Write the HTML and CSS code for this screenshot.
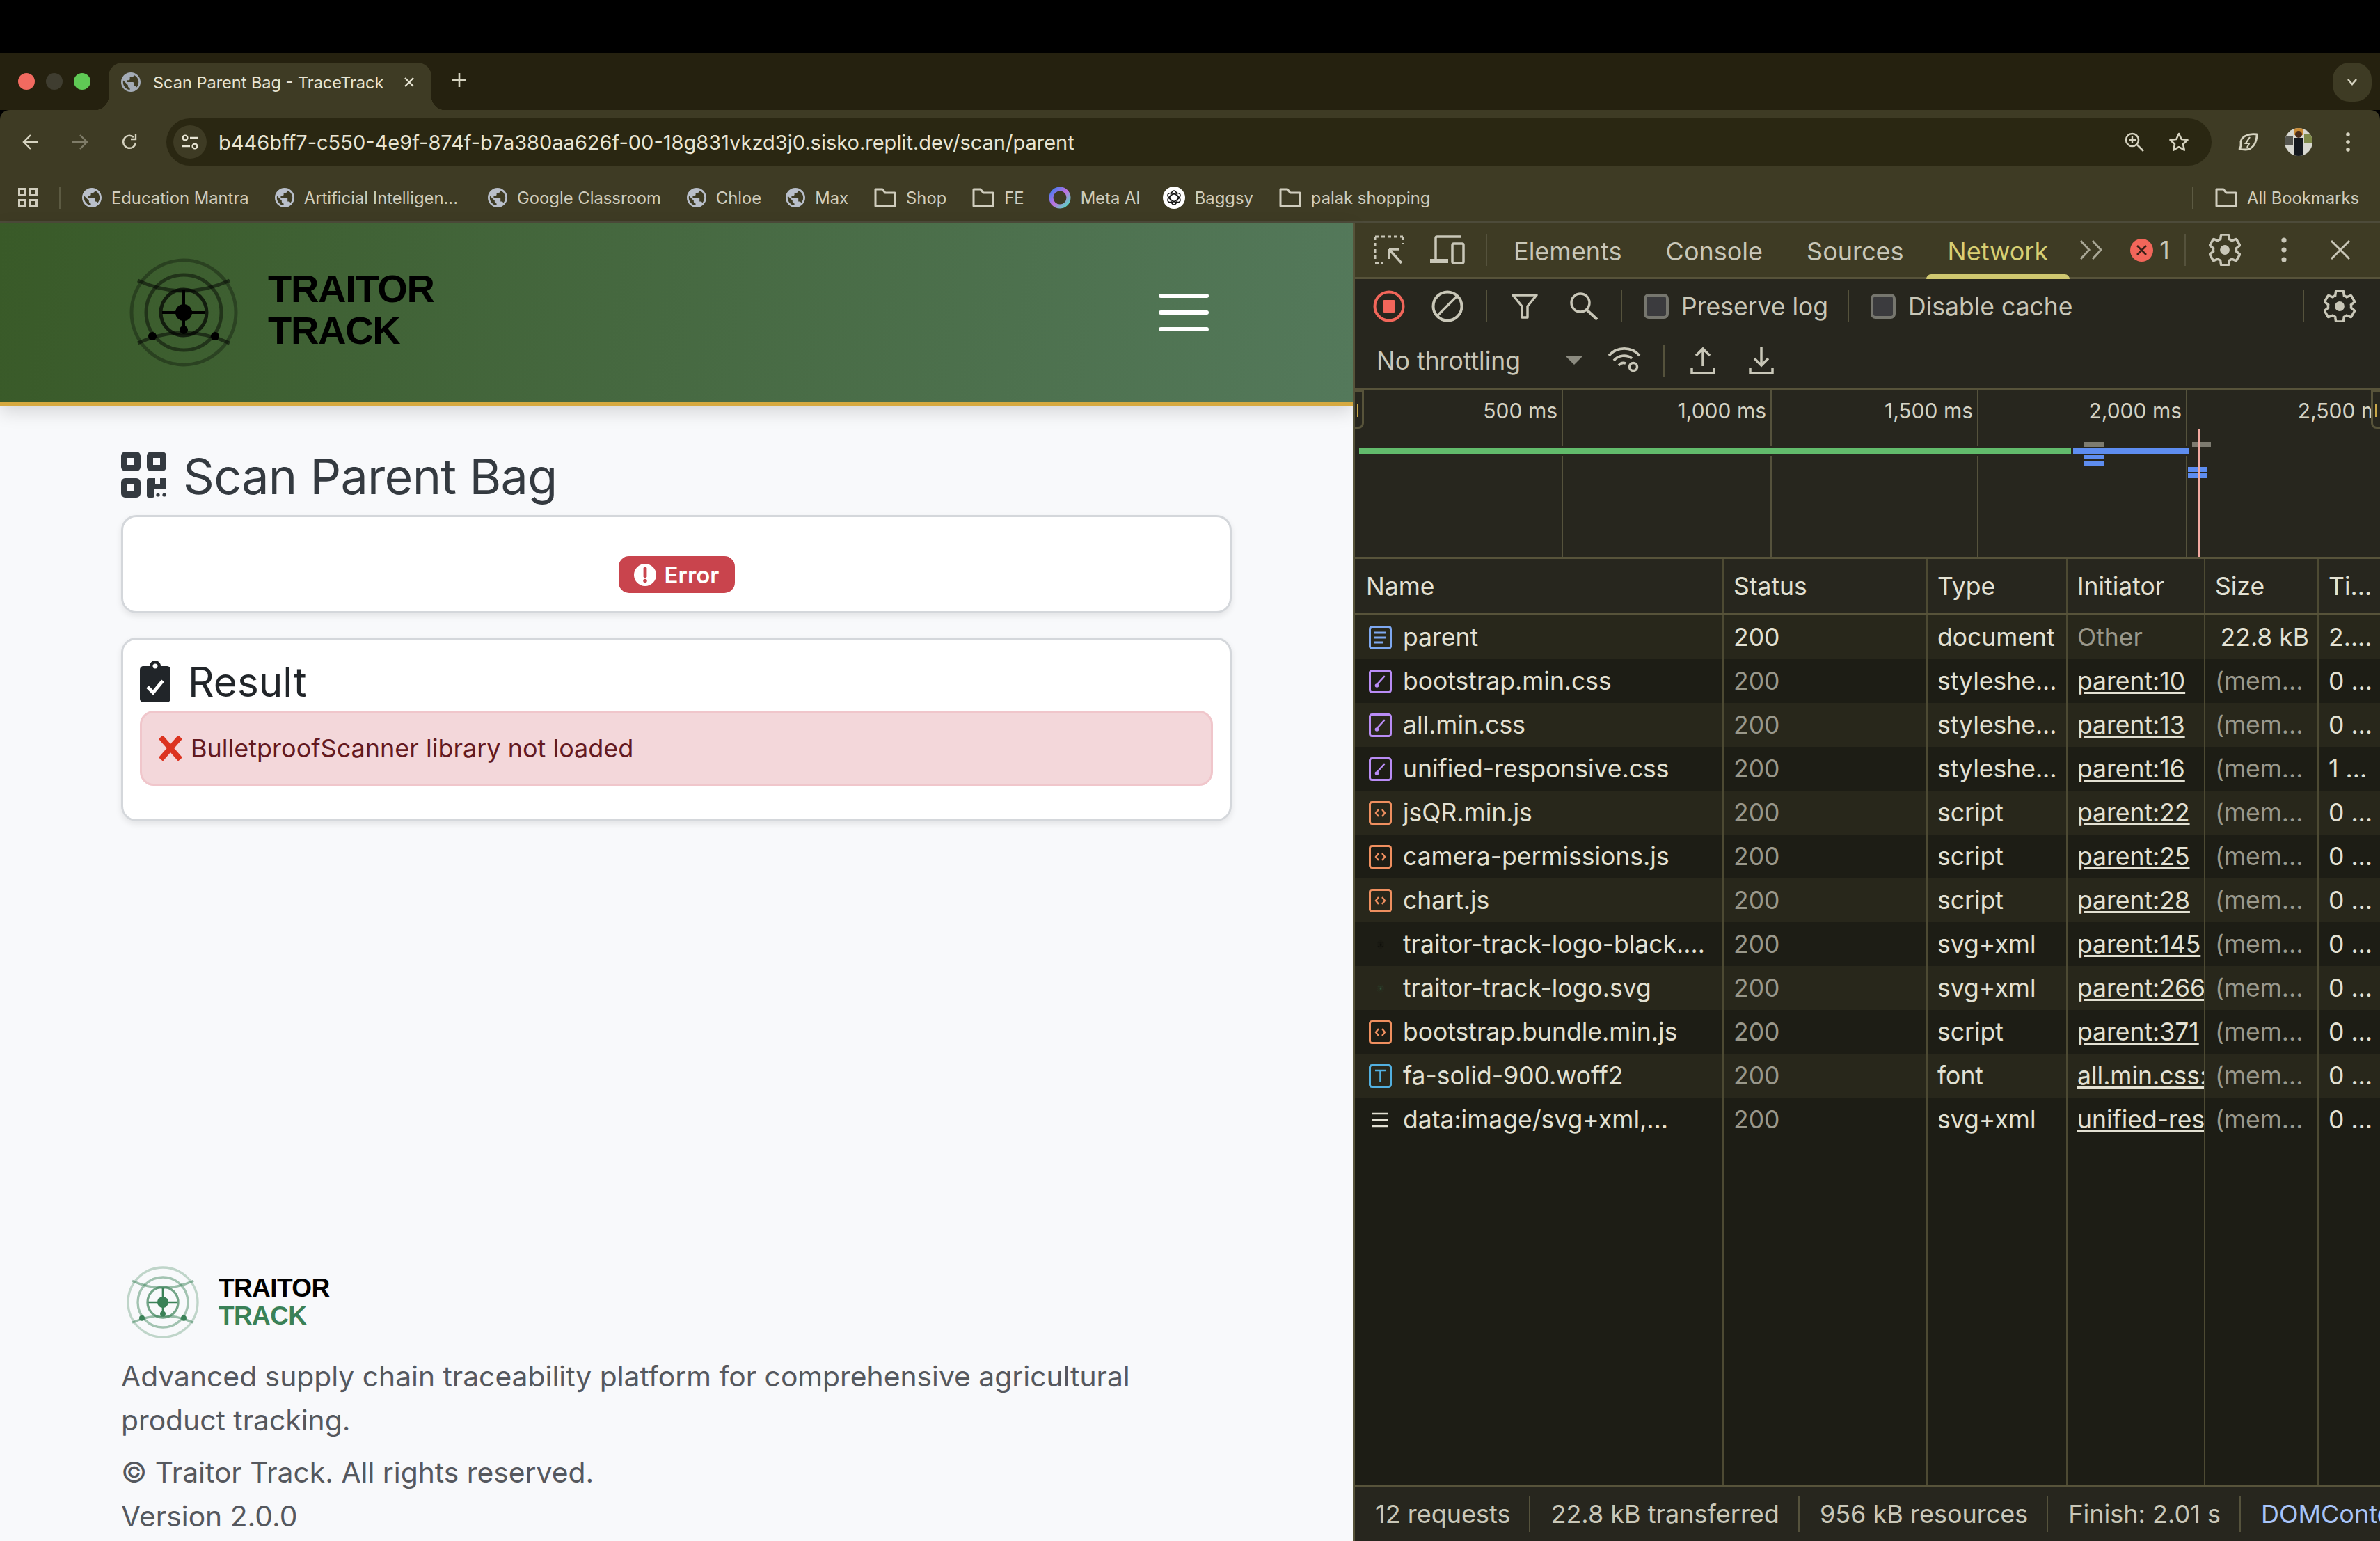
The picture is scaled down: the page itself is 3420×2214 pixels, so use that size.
FILE: index.html
```html
<!DOCTYPE html>
<html lang="en">
<head>
  <meta charset="UTF-8">
  <title>Scan Parent Bag - TraceTrack</title>
  <link rel="stylesheet" href="styles.css">
</head>
<body>
  <svg class="sprites" width="0" height="0">
    <symbol id="globe" viewBox="2 2 20 20"><path fill="currentColor" d="M12 2C6.48 2 2 6.48 2 12s4.48 10 10 10 10-4.48 10-10S17.52 2 12 2zm-1 17.93c-3.95-.49-7-3.85-7-7.93 0-.62.08-1.21.21-1.79L9 15v1c0 1.1.9 2 2 2v1.93zm6.9-2.54c-.26-.81-1-1.39-1.9-1.39h-1v-3c0-.55-.45-1-1-1H8v-2h2c.55 0 1-.45 1-1V7h2c1.1 0 2-.9 2-2v-.41c2.93 1.19 5 4.06 5 7.41 0 2.08-.8 3.97-2.1 5.39z"/></symbol>
    <symbol id="folder" viewBox="0 0 32 28"><path fill="none" stroke="currentColor" stroke-width="3" stroke-linejoin="round" d="M2 2h10l4 5h14v19H2z"/></symbol>
    <symbol id="gear" viewBox="2 2 20 20"><path fill="none" stroke="currentColor" stroke-width="1.5" d="M19.14 12.94c.04-.3.06-.61.06-.94 0-.32-.02-.64-.07-.94l2.03-1.58c.18-.14.23-.41.12-.61l-1.92-3.32c-.12-.22-.37-.29-.59-.22l-2.39.96c-.5-.38-1.03-.7-1.62-.94l-.36-2.54c-.04-.24-.24-.41-.48-.41h-3.84c-.24 0-.43.17-.47.41l-.36 2.54c-.59.24-1.13.57-1.62.94l-2.39-.96c-.22-.08-.47 0-.59.22L2.74 8.87c-.12.21-.08.47.12.61l2.03 1.58c-.05.3-.09.63-.09.94s.02.64.07.94l-2.03 1.58c-.18.14-.23.41-.12.61l1.92 3.32c.12.22.37.29.59.22l2.39-.96c.5.38 1.03.7 1.62.94l.36 2.54c.05.24.24.41.48.41h3.84c.24 0 .44-.17.47-.41l.36-2.54c.59-.24 1.13-.56 1.62-.94l2.39.96c.22.08.47 0 .59-.22l1.92-3.32c.12-.22.07-.47-.12-.61l-2.01-1.58z"/><circle cx="12" cy="12" r="3" fill="currentColor"/></symbol>
    <symbol id="logo" viewBox="0 0 156 156">
      <g fill="none" stroke="currentColor">
        <circle cx="78" cy="78" r="75" stroke-width="5" opacity=".3"/>
        <circle cx="78" cy="78" r="54" stroke-width="5" opacity=".45"/>
        <circle cx="78" cy="78" r="33" stroke-width="5" opacity=".7"/>
        <path d="M12 32Q78 62 144 32" stroke-width="5" opacity=".5"/>
        <path d="M12 122Q78 92 144 122" stroke-width="5" opacity=".5"/>
        <path d="M47 78H109M78 46V102" stroke-width="4"/>
      </g>
      <g fill="currentColor">
        <circle cx="78" cy="78" r="12"/>
        <circle cx="78" cy="103" r="6"/>
        <circle cx="33" cy="112" r="6"/>
        <circle cx="123" cy="112" r="6"/>
      </g>
    </symbol>
    <symbol id="doc-css" viewBox="0 0 33 34"><rect x="1.5" y="1.5" width="30" height="31" rx="3" fill="none" stroke="currentColor" stroke-width="3"/><path d="M22 10L13 20" stroke="currentColor" stroke-width="2.6" stroke-linecap="round"/><circle cx="11.5" cy="23" r="2.8" fill="currentColor"/></symbol>
    <symbol id="doc-js" viewBox="0 0 33 34"><rect x="1.5" y="1.5" width="30" height="31" rx="3" fill="none" stroke="currentColor" stroke-width="3"/><path d="M14 12l-4 5 4 5M19 12l4 5-4 5" fill="none" stroke="currentColor" stroke-width="2.4"/></symbol>
  </svg>

  <div class="mac-top"></div>

  <div class="tabstrip">
    <div class="lights">
      <span class="light red"></span>
      <span class="light grey"></span>
      <span class="light green"></span>
    </div>
    <div class="tab">
      <svg class="tab-fav"><use href="#globe"/></svg>
      <span class="tab-title">Scan Parent Bag - TraceTrack</span>
      <svg class="tab-x" viewBox="0 0 16 16"><path d="M2 2l12 12M14 2L2 14" stroke="currentColor" stroke-width="2.4"/></svg>
    </div>
    <svg class="tab-new" viewBox="0 0 20 20"><path d="M10 0v20M0 10h20" stroke="currentColor" stroke-width="2.6"/></svg>
    <div class="tab-list"><svg viewBox="0 0 16 10"><path d="M2 1l6 7 6-7" fill="none" stroke="currentColor" stroke-width="2.6"/></svg></div>
  </div>

  <div class="toolbar">
    <svg class="tb-icon" viewBox="0 0 24 24"><path d="M23 12H3M12 2L2 12l10 10" fill="none" stroke="currentColor" stroke-width="2.4"/></svg>
    <svg class="tb-icon fwd" viewBox="0 0 24 24"><path d="M1 12h20M12 2l10 10-10 10" fill="none" stroke="currentColor" stroke-width="2.4"/></svg>
    <svg class="tb-icon reload" viewBox="0 0 24 24"><path d="M21 13a9 9 0 1 1-3-8M21 1v7h-7" fill="none" stroke="currentColor" stroke-width="2.4"/></svg>
    <div class="omnibox">
      <span class="tune"><svg viewBox="0 0 26 26"><g fill="none" stroke="currentColor" stroke-width="2.4"><circle cx="6" cy="7" r="3.4"/><path d="M13 7h11M2 19h11"/><circle cx="20" cy="19" r="3.4"/></g></svg></span>
      <span class="url">b446bff7-c550-4e9f-874f-b7a380aa626f-00-18g831vkzd3j0.sisko.replit.dev/scan/parent</span>
      <svg class="omni-zoom" viewBox="0 0 28 28"><g fill="none" stroke="currentColor" stroke-width="2.6"><circle cx="11" cy="11" r="9"/><path d="M18 18l9 9"/></g><path d="M11 6v10M6 11h10" stroke="currentColor" stroke-width="2.4"/></svg>
      <svg class="omni-star" viewBox="0 0 30 30"><path d="M15 3l3.7 8 8.8 1-6.5 6 1.8 8.7L15 22.2 7.2 26.7 9 18l-6.5-6 8.800-1z" fill="none" stroke="currentColor" stroke-width="2.6" stroke-linejoin="round"/></svg>
    </div>
    <svg class="tb-leaf" viewBox="0 0 30 30"><path d="M27 4C14 2 3 8 4 17c.5 3-.5 6-2 8 3 1 6 1 9 1 10 0 16-10 16-22z" fill="none" stroke="currentColor" stroke-width="2.8" stroke-linejoin="round"/><path d="M17 8l-6 9h5l-3 6" fill="none" stroke="currentColor" stroke-width="2.2"/></svg>
    <svg class="avatar" viewBox="0 0 40 40"><defs><clipPath id="avatar-clip"><circle cx="20" cy="20" r="20"/></clipPath></defs><g clip-path="url(#avatar-clip)"><rect width="40" height="40" fill="#d8d8d0"/><rect x="28" y="8" width="12" height="14" fill="#7f8a4a"/><rect width="12" height="12" y="12" fill="#55554f"/><rect x="13" y="0" width="14" height="10" fill="#c98a34"/><circle cx="20" cy="9" r="5" fill="#4a2c1a"/><path d="M14 40V14h12v26z" fill="#14181e"/></g></svg>
    <svg class="tb-dots" viewBox="0 0 6 28"><circle cx="3" cy="3" r="2.8" fill="currentColor"/><circle cx="3" cy="14" r="2.8" fill="currentColor"/><circle cx="3" cy="25" r="2.8" fill="currentColor"/></svg>
  </div>

  <div class="bookmarks">
    <svg class="bm-apps" viewBox="0 0 28 28"><g fill="none" stroke="currentColor" stroke-width="3"><rect x="1.5" y="1.5" width="9" height="9"/><rect x="17.5" y="1.5" width="9" height="9"/><rect x="1.5" y="17.5" width="9" height="9"/><rect x="17.5" y="17.5" width="9" height="9"/></g></svg>
    <span class="bm-sep"></span>
    <a class="bm"><svg class="bm-globe"><use href="#globe"/></svg>Education Mantra</a>
    <a class="bm bm-long"><svg class="bm-globe"><use href="#globe"/></svg>Artificial Intelligen...</a>
    <a class="bm"><svg class="bm-globe"><use href="#globe"/></svg>Google Classroom</a>
    <a class="bm"><svg class="bm-globe"><use href="#globe"/></svg>Chloe</a>
    <a class="bm bm-max"><svg class="bm-globe"><use href="#globe"/></svg>Max</a>
    <a class="bm"><svg class="bm-folder"><use href="#folder"/></svg>Shop</a>
    <a class="bm"><svg class="bm-folder"><use href="#folder"/></svg>FE</a>
    <a class="bm bm-meta"><svg class="bm-ring" viewBox="0 0 32 32"><defs><linearGradient id="meta-grad" x1="0" y1="0" x2="1" y2="1"><stop offset="0" stop-color="#3f7cf0"/><stop offset=".5" stop-color="#c06fe0"/><stop offset="1" stop-color="#4de0c0"/></linearGradient></defs><circle cx="16" cy="16" r="12.5" fill="none" stroke="url(#meta-grad)" stroke-width="6"/></svg>Meta AI</a>
    <a class="bm"><svg class="bm-ring" viewBox="0 0 32 32"><circle cx="16" cy="16" r="16" fill="#fff"/><g fill="none" stroke="#111" stroke-width="1.5"><ellipse cx="16" cy="16" rx="10" ry="5" transform="rotate(30 16 16)"/><ellipse cx="16" cy="16" rx="10" ry="5" transform="rotate(90 16 16)"/><ellipse cx="16" cy="16" rx="10" ry="5" transform="rotate(150 16 16)"/></g></svg>Baggsy</a>
    <a class="bm"><svg class="bm-folder"><use href="#folder"/></svg>palak shopping</a>
    <span class="bm-sep bm-sep-end"></span>
    <a class="bm"><svg class="bm-folder"><use href="#folder"/></svg>All Bookmarks</a>
  </div>

  <div class="split">
    <div class="page">
      <header class="site-head">
        <svg class="head-logo"><use href="#logo"/></svg>
        <div class="head-brand">TRAITOR<br>TRACK</div>
        <button class="burger"><span></span><span></span><span></span></button>
      </header>

      <main class="content">
        <h1 class="page-title">
          <svg class="qr-icon" viewBox="0 0 65 66">
            <path fill-rule="evenodd" fill="#343a40" d="M6 0h16a6 6 0 0 1 6 6v16a6 6 0 0 1-6 6H6a6 6 0 0 1-6-6V6a6 6 0 0 1 6-6zm3 9v10h10V9zM43 0h16a6 6 0 0 1 6 6v16a6 6 0 0 1-6 6H43a6 6 0 0 1-6-6V6a6 6 0 0 1 6-6zm3 9v10h10V9zM6 38h16a6 6 0 0 1 6 6v16a6 6 0 0 1-6 6H6a6 6 0 0 1-6-6V44a6 6 0 0 1 6-6zm3 9v10h10V47zM40 38h9v8h7v-8h9v16H48v9a3 3 0 0 1-3 3h-5a3 3 0 0 1-3-3V41a3 3 0 0 1 3-3z"/>
            <circle cx="53" cy="62" r="2.6" fill="#343a40"/><circle cx="62" cy="62" r="2.6" fill="#343a40"/>
          </svg>
          Scan Parent Bag
        </h1>

        <section class="card status-card">
          <span class="badge">
            <svg viewBox="0 0 30 30"><circle cx="15" cy="15" r="15" fill="#fff"/><path d="M15 6v11" stroke="#c9444d" stroke-width="4.5" stroke-linecap="round"/><circle cx="15" cy="23" r="2.6" fill="#c9444d"/></svg>
            Error
          </span>
        </section>

        <section class="card result-card">
          <h2 class="result-title">
            <svg viewBox="0 0 44 60"><path fill="#212529" fill-rule="evenodd" d="M5 8h9a8 8 0 0 1 16 0h9a5 5 0 0 1 5 5v42a5 5 0 0 1-5 5H5a5 5 0 0 1-5-5V13a5 5 0 0 1 5-5zm17-3.500a3.500 3.500 0 1 0 0 7 3.500 3.500 0 0 0 0-7z"/><path d="M11 38l8 8 14-17" fill="none" stroke="#fff" stroke-width="5"/></svg>
            Result
          </h2>
          <div class="alert">
            <svg viewBox="0 0 36 36"><path d="M4 2l28 32M32 2L4 34" stroke="#dc3320" stroke-width="8"/></svg>
            BulletproofScanner library not loaded
          </div>
        </section>
      </main>

      <footer class="site-foot">
        <div class="foot-brand">
          <svg class="foot-logo"><use href="#logo"/></svg>
          <div class="foot-name">TRAITOR<br><span>TRACK</span></div>
        </div>
        <p>Advanced supply chain traceability platform for comprehensive agricultural product tracking.</p>
        <p>© Traitor Track. All rights reserved.<br>Version 2.0.0</p>
      </footer>
    </div>

    <div class="devtools">
      <div class="dt-tabs">
        <svg class="dt-inspect" viewBox="0 0 44 42"><path d="M2 2h40M2 2v36M2 40h12M42 2v10" fill="none" stroke="currentColor" stroke-width="3" stroke-dasharray="5 4"/><path d="M22 20h14M22 20v14M22 20l18 20" fill="none" stroke="currentColor" stroke-width="3.5"/></svg>
        <svg class="dt-device" viewBox="0 0 50 42"><path d="M8 36V4a2 2 0 0 1 2-2h34" fill="none" stroke="currentColor" stroke-width="3.5"/><path d="M0 34h26v6H0z" fill="currentColor"/><rect x="32" y="12" width="16" height="28" rx="2" fill="none" stroke="currentColor" stroke-width="3.5"/></svg>
        <span class="dt-sep"></span>
        <span class="dt-tab">Elements</span>
        <span class="dt-tab">Console</span>
        <span class="dt-tab">Sources</span>
        <span class="dt-tab active">Network</span>
        <svg class="dt-more" viewBox="0 0 36 30"><path d="M3 2l12 13L3 28M20 2l12 13-12 13" fill="none" stroke="currentColor" stroke-width="3"/></svg>
        <svg class="dt-err" viewBox="0 0 33 33"><circle cx="16.5" cy="16.5" r="16.5" fill="#f2665a"/><path d="M10 10l13 13M23 10L10 23" stroke="#3a2018" stroke-width="2.6"/></svg>
        <span class="dt-errcount">1</span>
        <span class="dt-sep dt-sep-err"></span>
        <svg class="dt-gear"><use href="#gear"/></svg>
        <svg class="dt-dots" viewBox="0 0 8 36"><circle cx="4" cy="4" r="3.6" fill="currentColor"/><circle cx="4" cy="18" r="3.6" fill="currentColor"/><circle cx="4" cy="32" r="3.6" fill="currentColor"/></svg>
        <svg class="dt-close" viewBox="0 0 30 30"><path d="M2 2l26 26M28 2L2 28" stroke="currentColor" stroke-width="3"/></svg>
      </div>

      <div class="dt-row1">
        <svg class="rec" viewBox="0 0 46 46"><circle cx="23" cy="23" r="20.5" fill="none" stroke="#f2665a" stroke-width="4"/><rect x="14" y="14" width="18" height="18" rx="2" fill="#f2665a"/></svg>
        <svg class="clear" viewBox="0 0 46 46"><circle cx="23" cy="23" r="20.5" fill="none" stroke="currentColor" stroke-width="4"/><path d="M36 9L9 36" stroke="currentColor" stroke-width="3.5"/></svg>
        <span class="dt-sep"></span>
        <svg class="filter" viewBox="0 0 38 36"><path d="M2 2h34L23 18v16h-8V18z" fill="none" stroke="currentColor" stroke-width="3.5" stroke-linejoin="round"/></svg>
        <svg class="search" viewBox="0 0 42 40"><circle cx="16" cy="15" r="13" fill="none" stroke="currentColor" stroke-width="3.5"/><path d="M25 25l15 14" stroke="currentColor" stroke-width="4"/></svg>
        <span class="dt-sep"></span>
        <span class="check"></span><span class="chk-label">Preserve log</span>
        <span class="dt-sep"></span>
        <span class="check"></span><span class="chk-label">Disable cache</span>
        <span class="dt-sep dt-sep-gear"></span>
        <svg class="dt-gear"><use href="#gear"/></svg>
      </div>

      <div class="dt-row2">
        <span class="throttle">No throttling</span>
        <span class="caret"></span>
        <svg class="wifi" viewBox="0 0 50 40"><g fill="none" stroke="currentColor" stroke-width="3.6"><path d="M2 13a29 29 0 0 1 44 0"/><path d="M9 20a19 19 0 0 1 26-3"/><path d="M16 27a9 9 0 0 1 10-3"/></g><circle cx="37" cy="29" r="5.5" fill="none" stroke="currentColor" stroke-width="3.5"/></svg>
        <span class="dt-sep"></span>
        <svg class="updown" viewBox="0 0 36 40"><path d="M18 28V3M8 13L18 3l10 10M2 30v8h32v-8" fill="none" stroke="currentColor" stroke-width="3.5"/></svg>
        <svg class="updown" viewBox="0 0 36 40"><path d="M18 1v26M8 17l10 10 10-10M2 30v8h32v-8" fill="none" stroke="currentColor" stroke-width="3.5"/></svg>
      </div>

      <div class="overview">
        <div class="tick" style="width: 299px">500 ms</div>
        <div class="tick" style="width: 300px">1,000 ms</div>
        <div class="tick" style="width: 297px">1,500 ms</div>
        <div class="tick" style="width: 300px">2,000 ms</div>
        <div class="tick tick-last">2,500 ms</div>
        <span class="handle handle-l"></span>
        <span class="handle handle-r"></span>
        <span class="bar bar-green"></span>
        <span class="bar bar-blue"></span>
        <span class="bar bar-grey grey-a"></span>
        <span class="bar bar-grey grey-b"></span>
        <span class="bar bar-mini mini-a"></span>
        <span class="bar bar-mini mini-b"></span>
        <span class="bar bar-mini mini-c"></span>
        <span class="bar bar-mini mini-d"></span>
        <span class="load-line"></span>
      </div>

      <div class="net-table">
        <div class="net-row net-head">
          <div class="cell name">Name</div><div class="cell">Status</div><div class="cell">Type</div><div class="cell">Initiator</div><div class="cell">Size</div><div class="cell">Ti...</div>
        </div>

        <div class="net-row">
          <div class="cell name"><svg class="file file-doc" viewBox="0 0 33 34"><rect x="1.5" y="1.5" width="30" height="31" rx="3" fill="none" stroke="currentColor" stroke-width="3"/><path d="M8 10h17M8 17h17M8 24h12" stroke="currentColor" stroke-width="3"/></svg>parent</div>
          <div class="cell">200</div><div class="cell">document</div><div class="cell dim">Other</div><div class="cell size">22.8 kB</div><div class="cell">2....</div>
        </div>
        <div class="net-row">
          <div class="cell name"><svg class="file file-css"><use href="#doc-css"/></svg>bootstrap.min.css</div>
          <div class="cell dim">200</div><div class="cell">styleshe...</div><div class="cell"><a>parent:10</a></div><div class="cell dim">(mem...</div><div class="cell">0 ...</div>
        </div>
        <div class="net-row">
          <div class="cell name"><svg class="file file-css"><use href="#doc-css"/></svg>all.min.css</div>
          <div class="cell dim">200</div><div class="cell">styleshe...</div><div class="cell"><a>parent:13</a></div><div class="cell dim">(mem...</div><div class="cell">0 ...</div>
        </div>
        <div class="net-row">
          <div class="cell name"><svg class="file file-css"><use href="#doc-css"/></svg>unified-responsive.css</div>
          <div class="cell dim">200</div><div class="cell">styleshe...</div><div class="cell"><a>parent:16</a></div><div class="cell dim">(mem...</div><div class="cell">1 ...</div>
        </div>
        <div class="net-row">
          <div class="cell name"><svg class="file file-js"><use href="#doc-js"/></svg>jsQR.min.js</div>
          <div class="cell dim">200</div><div class="cell">script</div><div class="cell"><a>parent:22</a></div><div class="cell dim">(mem...</div><div class="cell">0 ...</div>
        </div>
        <div class="net-row">
          <div class="cell name"><svg class="file file-js"><use href="#doc-js"/></svg>camera-permissions.js</div>
          <div class="cell dim">200</div><div class="cell">script</div><div class="cell"><a>parent:25</a></div><div class="cell dim">(mem...</div><div class="cell">0 ...</div>
        </div>
        <div class="net-row">
          <div class="cell name"><svg class="file file-js"><use href="#doc-js"/></svg>chart.js</div>
          <div class="cell dim">200</div><div class="cell">script</div><div class="cell"><a>parent:28</a></div><div class="cell dim">(mem...</div><div class="cell">0 ...</div>
        </div>
        <div class="net-row">
          <div class="cell name"><svg class="file file-thumb"><use href="#logo"/></svg>traitor-track-logo-black....</div>
          <div class="cell dim">200</div><div class="cell">svg+xml</div><div class="cell"><a>parent:145</a></div><div class="cell dim">(mem...</div><div class="cell">0 ...</div>
        </div>
        <div class="net-row">
          <div class="cell name"><svg class="file file-thumb green-thumb"><use href="#logo"/></svg>traitor-track-logo.svg</div>
          <div class="cell dim">200</div><div class="cell">svg+xml</div><div class="cell"><a>parent:266</a></div><div class="cell dim">(mem...</div><div class="cell">0 ...</div>
        </div>
        <div class="net-row">
          <div class="cell name"><svg class="file file-js"><use href="#doc-js"/></svg>bootstrap.bundle.min.js</div>
          <div class="cell dim">200</div><div class="cell">script</div><div class="cell"><a>parent:371</a></div><div class="cell dim">(mem...</div><div class="cell">0 ...</div>
        </div>
        <div class="net-row">
          <div class="cell name"><svg class="file file-font" viewBox="0 0 33 34"><rect x="1.5" y="1.5" width="30" height="31" rx="3" fill="none" stroke="currentColor" stroke-width="3"/><path d="M9 9h15M16.5 9v17" stroke="currentColor" stroke-width="2.6"/></svg>fa-solid-900.woff2</div>
          <div class="cell dim">200</div><div class="cell">font</div><div class="cell"><a>all.min.css:</a></div><div class="cell dim">(mem...</div><div class="cell">0 ...</div>
        </div>
        <div class="net-row">
          <div class="cell name"><svg class="file file-data" viewBox="0 0 33 34"><path d="M5 8h23M5 17h23M5 26h23" stroke="currentColor" stroke-width="2.6"/></svg>data:image/svg+xml,...</div>
          <div class="cell dim">200</div><div class="cell">svg+xml</div><div class="cell"><a>unified-responsive.css</a></div><div class="cell dim">(mem...</div><div class="cell">0 ...</div>
        </div>

        <div class="net-row net-fill">
          <div class="cell name"></div><div class="cell"></div><div class="cell"></div><div class="cell"></div><div class="cell"></div><div class="cell"></div>
        </div>
      </div>

      <div class="dt-status">
        <span>12 requests</span>
        <span>22.8 kB transferred</span>
        <span>956 kB resources</span>
        <span>Finish: 2.01 s</span>
        <span class="dom">DOMContentLoaded: 1.97 s</span>
      </div>
    </div>
  </div>
</body>
</html>
```

FILE: styles.css
```css
* { box-sizing: border-box; }
html, body {
  margin: 0;
  width: 3420px;
  height: 2214px;
  overflow: hidden;
}
body {
  display: flex;
  flex-direction: column;
  background: #000;
  font-family: Inter, "Liberation Sans", sans-serif;
}
svg { display: block; flex: none; }
.sprites { position: absolute; }

/* browser chrome */
.mac-top { height: 76px; background: #000; }
.tabstrip {
  height: 82px;
  background: #25210f;
  display: flex;
  align-items: flex-start;
  position: relative;
  color: #d6d3c0;
}
.lights {
  width: 156px;
  padding: 29px 0 0 26px;
  display: flex;
  gap: 16px;
}
.light { width: 24px; height: 24px; border-radius: 50%; }
.light.red { background: #f16a60; }
.light.grey { background: #3f3d30; }
.light.green { background: #5fc955; }
.tab {
  width: 464px;
  height: 68px;
  margin-top: 14px;
  background: #3e3b24;
  border-radius: 20px 20px 0 0;
  display: flex;
  align-items: center;
  padding: 0 0 12px 18px;
  position: relative;
  color: #e8e5d4;
}
.tab::before, .tab::after {
  content: "";
  position: absolute;
  bottom: 0;
  width: 20px;
  height: 20px;
}
.tab::before { left: -20px; background: radial-gradient(circle at 0 0, transparent 20px, #3e3b24 20.5px); }
.tab::after { right: -20px; background: radial-gradient(circle at 100% 0, transparent 20px, #3e3b24 20.5px); }
.tab-fav { width: 28px; height: 28px; color: #a3abb6; }
.tab-title { font-size: 23.5px; margin-left: 18px; width: 360px; white-space: nowrap; }
.tab-x { width: 16px; height: 16px; }
.tab-new { width: 20px; height: 20px; margin: 29px 0 0 30px; }
.tab-list {
  width: 56px;
  height: 56px;
  border-radius: 24px;
  background: #3e3b24;
  margin: 14px 12px 0 auto;
  display: flex;
  align-items: center;
  justify-content: center;
}
.tab-list svg { width: 16px; height: 10px; }

.toolbar {
  height: 80px;
  background: #3e3b24;
  border-radius: 14px 14px 0 0;
  display: flex;
  align-items: flex-start;
  padding: 12px 0 0 32px;
  color: #d6d3c0;
  position: relative;
}
.tb-icon { width: 24px; height: 24px; margin-top: 22px; margin-right: 47px; }
.tb-icon.fwd { color: #7f7c68; }
.tb-icon.reload { margin-right: 41px; }
.omnibox {
  width: 2939px;
  height: 68px;
  border-radius: 34px;
  background: #2a2712;
  display: flex;
  align-items: center;
  padding: 0 32px 0 10px;
  color: #e8e5d4;
}
.tune {
  width: 48px;
  height: 48px;
  border-radius: 50%;
  background: #3e3b24;
  display: flex;
  align-items: center;
  justify-content: center;
}
.tune svg { width: 26px; height: 26px; }
.url { font-size: 29px; margin-left: 17px; white-space: nowrap; flex: 1; }
.omni-zoom { width: 28px; height: 28px; color: #d6d3c0; margin-right: 35px; }
.omni-star { width: 30px; height: 30px; color: #d6d3c0; }
.tb-leaf { width: 30px; height: 30px; margin: 19px 0 0 38px; }
.avatar { width: 40px; height: 40px; margin: 14px 0 0 37px; }
.tb-dots { width: 6px; height: 28px; margin: 20px 0 0 48px; }

.bookmarks {
  height: 82px;
  background: #3e3b24;
  border-bottom: 2px solid #4d4b3a;
  display: flex;
  align-items: center;
  padding: 12px 30px 0 26px;
  color: #d0cdbd;
  font-size: 23.8px;
  gap: 37px;
  white-space: nowrap;
}
.bm-apps { width: 28px; height: 28px; }
.bm-sep { width: 2px; height: 32px; background: #5c5a42; margin: 0 -6px; }
.bm-sep-end { margin-left: auto; }
.bm { display: flex; align-items: center; gap: 14px; }
.bm-long { margin-right: 6px; }
.bm-max { margin-left: -2px; }
.bm-meta { margin: 0 -5px 0 -2px; }
.bm-globe { width: 28px; height: 28px; color: #b9bfca; }
.bm-folder { width: 32px; height: 28px; }
.bm-ring { width: 32px; height: 32px; }

/* page on the left */
.split { flex: 1; display: flex; min-height: 0; }
.page {
  width: 1944px;
  background: #f8f9fb;
  display: flex;
  flex-direction: column;
}
.site-head {
  height: 264px;
  flex: none;
  background: linear-gradient(100deg, #395a28, #54795b);
  border-bottom: 6px solid #d6a93f;
  box-shadow: 0 8px 24px rgba(0, 0, 0, .14);
  display: flex;
  align-items: center;
  padding: 0 207px 0 186px;
}
.head-logo { width: 156px; height: 156px; color: #000; }
.head-brand {
  font-family: "Liberation Sans", Arial, sans-serif;
  font-weight: 700;
  font-size: 56px;
  line-height: 60px;
  letter-spacing: -1.3px;
  color: #000;
  margin: 0 0 8px 43px;
}
.burger {
  margin-left: auto;
  width: 72px;
  padding: 0;
  border: 0;
  background: none;
  display: flex;
  flex-direction: column;
  gap: 18px;
}
.burger span { height: 6px; background: #fff; border-radius: 3px; }

.content { padding: 56px 174px 0 174px; }
.page-title {
  margin: 0;
  height: 100px;
  display: flex;
  align-items: flex-start;
  gap: 24px;
  font-size: 70px;
  font-weight: 400;
  line-height: 90px;
  letter-spacing: -.7px;
  color: #343a40;
  white-space: nowrap;
}
.qr-icon { width: 65px; height: 66px; margin-top: 9px; }
.card {
  background: #fff;
  border: 3px solid #d4d7db;
  border-radius: 22px;
  box-shadow: 0 4px 10px rgba(0, 0, 0, .09);
}
.status-card {
  height: 141px;
  display: flex;
  justify-content: center;
  padding-top: 56px;
}
.badge {
  height: 53px;
  width: 167px;
  background: #c9444d;
  border-radius: 15px;
  color: #fff;
  font-size: 33px;
  font-weight: 600;
  display: flex;
  align-items: center;
  justify-content: center;
  gap: 12px;
}
.badge svg { width: 32px; height: 32px; }
.result-card { margin-top: 35px; height: 264px; padding: 30px 24px 0 24px; }
.result-title {
  margin: 0;
  height: 72px;
  display: flex;
  align-items: flex-start;
  gap: 25px;
  font-size: 58.5px;
  font-weight: 400;
  line-height: 62px;
  color: #212529;
}
.result-title svg { width: 44px; height: 60px; }
.alert {
  height: 108px;
  background: #f3d7da;
  border: 3px solid #f0c6cb;
  border-radius: 20px;
  display: flex;
  align-items: center;
  gap: 11px;
  padding-left: 23px;
  font-size: 36px;
  color: #64191f;
}
.alert svg { width: 36px; height: 36px; }

.site-foot {
  margin-top: auto;
  padding: 0 176px 4px 174px;
  font-size: 40.8px;
  line-height: 63px;
  color: #55585e;
}
.foot-brand { display: flex; align-items: center; gap: 28px; padding-left: 8px; margin-bottom: 23px; }
.foot-logo { width: 104px; height: 104px; color: #3a8157; }
.foot-name {
  font-family: "Liberation Sans", Arial, sans-serif;
  font-weight: 700;
  font-size: 37px;
  line-height: 40px;
  letter-spacing: -.6px;
  color: #000;
}
.foot-name span { color: #3a8157; }
.site-foot p { margin: 0 0 12px; }
.site-foot p:last-child { margin-bottom: 0; }

/* devtools on the right */
.devtools {
  flex: 1;
  min-width: 0;
  border-left: 3px solid #56533a;
  background: #27261e;
  color: #c9c7b8;
  display: flex;
  flex-direction: column;
  font-size: 35.5px;
}
.dt-sep { width: 2px; height: 46px; background: #55523c; flex: none; }
.dt-tabs {
  height: 81px;
  flex: none;
  background: #3e3b24;
  border-bottom: 3px solid #57533a;
  display: flex;
  align-items: center;
  padding-left: 27px;
  position: relative;
}
.dt-inspect { width: 44px; height: 42px; }
.dt-device { width: 50px; height: 42px; margin: 0 30px 0 37px; }
.dt-tab { margin-left: 38px; margin-right: 25px; font-size: 36px; padding-top: 4px; line-height: 74px; white-space: nowrap; }
.dt-tab.active { color: #d8cf73; position: relative; }
.dt-tab.active::after {
  content: "";
  position: absolute;
  left: -31px;
  right: -31px;
  bottom: -3px;
  height: 7px;
  background: #d0c870;
  border-radius: 7px 7px 0 0;
}
.dt-more { width: 36px; height: 30px; margin-left: 19px; color: #a9a795; }
.dt-err { width: 33px; height: 33px; margin-left: 38px; }
.dt-errcount { margin-left: 9px; width: 15px; }
.dt-sep-err { margin-left: 21px; }
.dt-tabs .dt-gear { margin-left: 33px; }
.dt-gear { width: 46px; height: 46px; }
.dt-dots { width: 8px; height: 36px; margin-left: 58px; }
.dt-close { width: 30px; height: 30px; margin-left: 62px; }

.dt-row1 {
  height: 78px;
  flex: none;
  display: flex;
  align-items: center;
  padding-left: 26px;
  color: #c9c7b8;
}
.rec { width: 46px; height: 46px; }
.clear { width: 46px; height: 46px; margin: 0 32px 0 38px; }
.filter { width: 38px; height: 36px; margin-left: 35px; }
.search { width: 42px; height: 40px; margin: 0 32px 0 45px; }
.check {
  width: 36px;
  height: 36px;
  border: 4px solid #76766e;
  border-radius: 7px;
  background: #3b3b3e;
  margin-left: 31px;
  flex: none;
}
.chk-label { margin: 0 28px 0 18px; white-space: nowrap; }
.dt-sep-gear { margin-left: auto; margin-right: 28px; }
.dt-row1 .dt-gear { margin-right: 35px; }

.dt-row2 {
  height: 78px;
  flex: none;
  display: flex;
  align-items: center;
  padding-left: 31px;
}
.throttle { width: 212px; white-space: nowrap; }
.caret {
  width: 0;
  height: 0;
  margin-left: 60px;
  border-left: 12px solid transparent;
  border-right: 12px solid transparent;
  border-top: 12px solid #8c8b80;
}
.wifi { width: 50px; height: 40px; margin: 0 30px 0 36px; }
.updown { width: 36px; height: 40px; margin-left: 37px; }
.updown + .updown { margin-left: 48px; }

.overview {
  height: 246px;
  flex: none;
  border-top: 3px solid #57533a;
  border-bottom: 3px solid #57533a;
  display: flex;
  position: relative;
  overflow: hidden;
  font-size: 30px;
}
.tick {
  flex: none;
  border-right: 2px solid #55523c;
  text-align: right;
  padding: 12px 6px 0 0;
  white-space: nowrap;
  color: #d4d2c3;
}
.tick-last { width: 300px; }
.handle {
  position: absolute;
  top: 0;
  width: 13px;
  height: 56px;
  background: #27261e;
  border: 3px solid #57533a;
}
.handle::after {
  content: "";
  position: absolute;
  left: 3px;
  top: 18px;
  width: 2px;
  height: 18px;
  background: #c9a84a;
}
.handle-l { left: 0; border-left: 0; border-radius: 0 0 8px 0; }
.handle-r { right: 0; border-right: 0; border-radius: 0 0 0 8px; }
.bar { position: absolute; }
.bar-green, .bar-blue { top: 84px; height: 8px; box-shadow: 0 0 0 3px #27261e; }
.bar-green { left: 6px; width: 1026px; background: #62bb6c; }
.bar-blue { left: 1032px; width: 166px; background: #5e8df0; }
.bar-grey { top: 75px; height: 7px; background: #7d7b70; }
.grey-a { left: 1048px; width: 29px; }
.grey-b { left: 1203px; width: 27px; }
.bar-mini { width: 28px; height: 7px; background: #5e8df0; }
.mini-a { left: 1048px; top: 93px; }
.mini-b { left: 1048px; top: 102px; }
.mini-c { left: 1197px; top: 111px; }
.mini-d { left: 1197px; top: 120px; }
.load-line { position: absolute; left: 1212px; top: 57px; bottom: 0; width: 2px; background: #f2a9a0; }

.net-table {
  flex: 1;
  min-height: 0;
  display: flex;
  flex-direction: column;
  background: #1d1d15;
  color: #e3e1d3;
  font-size: 35.5px;
  border-bottom: 3px solid #57533a;
}
.net-row {
  display: grid;
  grid-template-columns: 530px 293px 201px 198px 163px 1fr;
  height: 63px;
  flex: none;
}
.net-row:nth-child(even) { background: #28271b; }
.net-head {
  height: 81px;
  background: #27261e;
  border-bottom: 3px solid #57533a;
}
.net-fill { flex: 1; background: none !important; }
.cell {
  border-right: 2px solid #4d4a33;
  padding-left: 14px;
  display: flex;
  align-items: center;
  overflow: hidden;
  white-space: nowrap;
}
.cell:last-child { border-right: 0; }
.cell.name { padding-left: 20px; gap: 16px; }
.net-head .cell.name { padding-left: 16px; }
.cell.dim { color: #9a988b; }
.cell.size { justify-content: flex-end; padding-right: 12px; }
.cell a { text-decoration: underline; text-underline-offset: 3px; text-decoration-thickness: 3px; }
.file { width: 33px; height: 34px; }
.file-doc { color: #7ea8f0; }
.file-css { color: #b98cf5; }
.file-js { color: #ef8f5f; }
.file-font { color: #52b0e0; }
.file-data { color: #e3e1d3; }
.file-thumb { color: #000; padding: 11px; opacity: .6; }
.green-thumb { color: #3a8157; }

.dt-status {
  height: 78px;
  flex: none;
  display: flex;
  align-items: center;
  font-size: 36px;
  white-space: nowrap;
  overflow: hidden;
  color: #c9c7b8;
  padding-left: 29px;
}
.dt-status span {
  padding-right: 29px;
  margin-right: 29px;
  position: relative;
}
.dt-status span::after {
  content: "";
  position: absolute;
  right: 0;
  top: -4px;
  bottom: -4px;
  width: 2px;
  background: #55523c;
}
.dt-status .dom { color: #a8c4f8; }
.dt-status .dom::after { display: none; }
```
